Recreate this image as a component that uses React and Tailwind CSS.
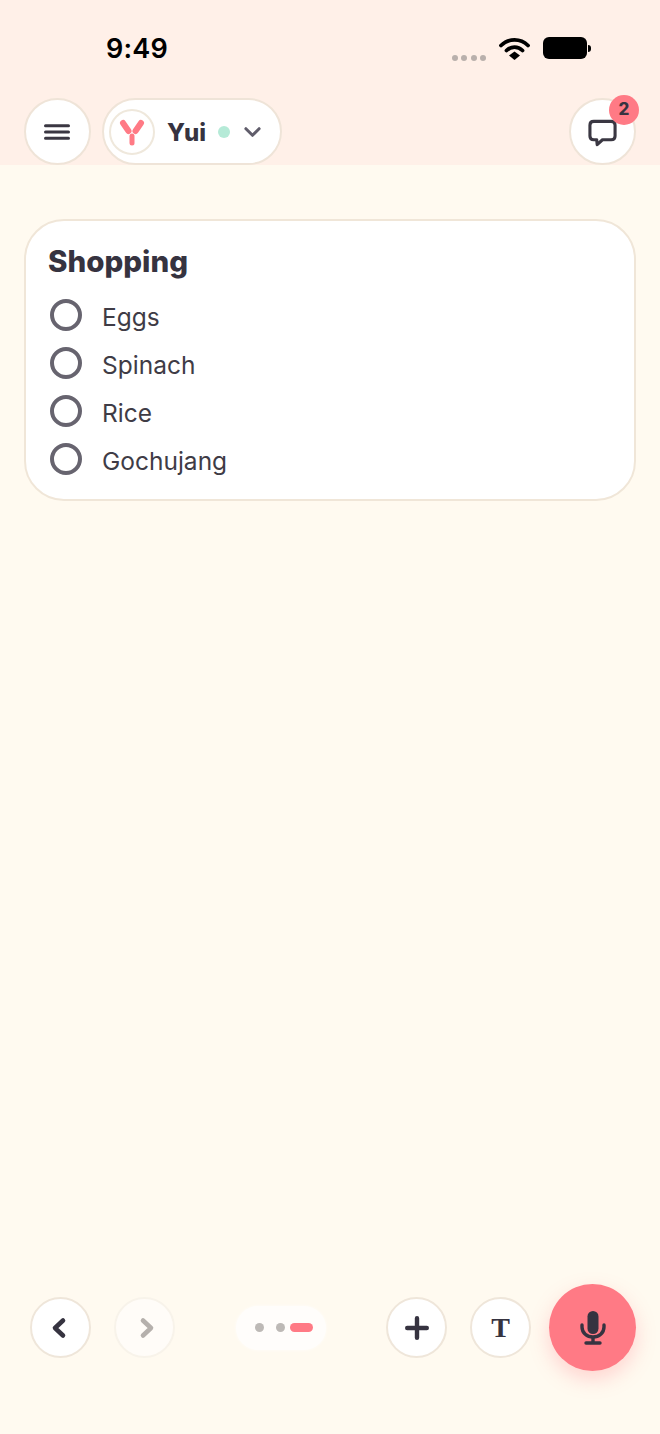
import React from 'react';

const font = { fontFamily: 'Inter, sans-serif' };
const items = ['Eggs', 'Spinach', 'Rice', 'Gochujang'];

const RoundButton = ({ children, className = '' }) => (
  <button className={`flex h-[61px] w-[61px] flex-none items-center justify-center rounded-full border-2 ${className}`}>
    {children}
  </button>
);

const StatusBar = () => (
  <div className="flex h-[98px] flex-none items-start pl-[106px] pr-[69px] pt-[32px]">
    <span className="text-[27px] font-semibold leading-[34px] tracking-[0.2px] text-black">9:49</span>
    <div className="ml-auto flex items-start">
      <div className="mt-[23px] flex gap-[3.3px]">
        {[0, 1, 2, 3].map((i) => (
          <span key={i} className="h-[6px] w-[6px] rounded-full bg-[#b9b0ac]" />
        ))}
      </div>
      <svg className="ml-[13px] mt-[4px]" width="31" height="24" viewBox="0 0 31 24" fill="none">
        <path d="M2 9.5C9.5 2 21.5 2 29 9.5" stroke="black" strokeWidth="3.8" strokeLinecap="round" />
        <path d="M7.5 14.5C12 10 19 10 23.5 14.5" stroke="black" strokeWidth="3.8" strokeLinecap="round" />
        <path d="M15.5 15.5L21 19.5L15.5 24L10 19.5Z" fill="black" />
      </svg>
      <div className="ml-[13px] mt-[5px] flex items-center">
        <span className="h-[22px] w-[44px] rounded-[6px] bg-black" />
        <span className="ml-[1px] h-[7px] w-[3px] rounded-r-full bg-black" />
      </div>
    </div>
  </div>
);

const Header = () => (
  <div className="flex h-[165px] flex-none flex-col bg-[#fff0e8]">
    <StatusBar />
    <div className="flex h-[67px] items-start pl-[23.5px] pr-[24px]">
      <button className="flex h-[67px] w-[67px] flex-none items-center justify-center rounded-full border-2 border-[#efe4d8] bg-white">
        <svg width="26" height="16" viewBox="0 0 26 16" fill="none" stroke="#3a3742" strokeWidth="3" strokeLinecap="round">
          <path d="M1.5 1.7H24.5M1.5 8H24.5M1.5 14.3H24.5" />
        </svg>
      </button>
      <div className="ml-[11px] flex h-[67px] w-[180.5px] flex-none items-center rounded-full border-2 border-[#efe4d8] bg-white pl-[5.5px]">
        <div className="flex h-[46px] w-[46px] flex-none items-center justify-center rounded-full border-2 border-[#efe8dc] bg-white">
          <svg width="28" height="28" viewBox="0 0 28 28" fill="none" stroke="#ff7a85" strokeLinecap="round">
            <path d="M5 5L10.5 13M23 5L17.5 13" strokeWidth="6" />
            <path d="M14 18V25" strokeWidth="5" />
          </svg>
        </div>
        <span className="ml-[12px] mt-[2px] text-[24px] font-extrabold leading-none text-[#363340]">Yui</span>
        <span className="ml-[12px] h-[12px] w-[12px] rounded-full bg-[#b5ead7]" />
        <svg className="ml-[14px]" width="17" height="12" viewBox="0 0 18 12" fill="none" stroke="#605d6b" strokeWidth="3.2" strokeLinecap="round" strokeLinejoin="round">
          <path d="M2 2.5L9 9.5L16 2.5" />
        </svg>
      </div>
      <div className="relative ml-auto">
        <button className="flex h-[67px] w-[67px] items-center justify-center rounded-full border-2 border-[#efe4d8] bg-white">
          <svg className="mt-[3px]" width="29" height="28" viewBox="0 0 30 28" fill="none" stroke="#3a3742" strokeWidth="3.2" strokeLinejoin="round">
            <path d="M6 2H24C26.5 2 28 3.5 28 6V17C28 19.5 26.5 21 24 21H15L9.5 26L9 21H6C3.5 21 2 19.5 2 17V6C2 3.5 3.5 2 6 2Z" />
          </svg>
        </button>
        <span className="absolute -right-[3px] -top-[3px] flex h-[30px] w-[30px] items-center justify-center rounded-full bg-[#ff7a85] text-[17px] font-extrabold text-[#363340]">2</span>
      </div>
    </div>
  </div>
);

const ShoppingCard = () => (
  <div className="mx-[24px] mt-[54px] h-[282px] rounded-[40px] border-2 border-[#f0e6d8] bg-white pl-[22px] pt-[21px]">
    <h2 className="text-[29.5px] font-extrabold leading-[38px] text-[#363340]">Shopping</h2>
    <ul className="mt-[13px]">
      {items.map((item) => (
        <li key={item} className="flex h-[48px] items-center">
          <span className="mb-[4px] ml-[2px] h-[32px] w-[32px] flex-none rounded-full border-[4px] border-[#67646f]" />
          <span className="ml-[20px] text-[24.5px] leading-none text-[#3f3c46]">{item}</span>
        </li>
      ))}
    </ul>
  </div>
);

const BottomBar = () => (
  <div className="mb-[63px] flex h-[87px] flex-none items-center pl-[30px]">
    <RoundButton className="border-[#efe6da] bg-white">
      <svg className="mr-[4px]" width="18" height="24" viewBox="0 0 18 24" fill="none" stroke="#363340" strokeWidth="4.6" strokeLinecap="round" strokeLinejoin="round">
        <path d="M13 4.5L5 12L13 19.5" />
      </svg>
    </RoundButton>
    <RoundButton className="ml-[23px] border-[#f8f3ea] bg-[#fffcf8]">
      <svg className="ml-[4px]" width="18" height="24" viewBox="0 0 18 24" fill="none" stroke="#b5b0ac" strokeWidth="4.6" strokeLinecap="round" strokeLinejoin="round">
        <path d="M5 4.5L13 12L5 19.5" />
      </svg>
    </RoundButton>
    <div className="ml-[61px] flex h-[44px] w-[90px] flex-none items-center rounded-[22px] bg-[#fffdfb] pl-[19px] shadow-[0_0_3px_#fffdfb]">
      <span className="h-[9px] w-[9px] rounded-full bg-[#bdb9b6]" />
      <span className="ml-[12px] h-[9px] w-[9px] rounded-full bg-[#bdb9b6]" />
      <span className="ml-[5px] h-[9px] w-[23px] rounded-full bg-[#ff7a85]" />
    </div>
    <RoundButton className="ml-[60px] border-[#efe6da] bg-white">
      <svg width="24" height="24" viewBox="0 0 24 24" fill="none" stroke="#363340" strokeWidth="4.4" strokeLinecap="round">
        <path d="M12 2.2V21.8M2.2 12H21.8" />
      </svg>
    </RoundButton>
    <RoundButton className="ml-[23px] border-[#efe6da] bg-white">
      <span className="text-[28px] font-bold leading-none text-[#363340]" style={{ fontFamily: '"Liberation Serif", serif' }}>T</span>
    </RoundButton>
    <button className="ml-[18px] flex h-[87px] w-[87px] flex-none items-center justify-center rounded-full bg-[#ff7a85] shadow-[0_8px_20px_rgba(255,122,133,0.3)]">
      <svg width="26" height="34" viewBox="0 0 26 34" fill="none" stroke="#363340" strokeLinecap="round">
        <rect x="7.5" y="0" width="11" height="23" rx="5.5" fill="#363340" stroke="none" />
        <path d="M2 14V16C2 22 7 26 13 26C19 26 24 22 24 16V14" strokeWidth="3.4" />
        <path d="M13 26V32" strokeWidth="3.4" strokeLinecap="butt" />
        <path d="M6 32H20" strokeWidth="3.4" />
      </svg>
    </button>
  </div>
);

export default function App() {
  return (
    <div className="flex h-[1434px] w-[660px] flex-col overflow-hidden bg-[#fffaf0]" style={font}>
      <Header />
      <ShoppingCard />
      <div className="flex-1" />
      <BottomBar />
    </div>
  );
}
